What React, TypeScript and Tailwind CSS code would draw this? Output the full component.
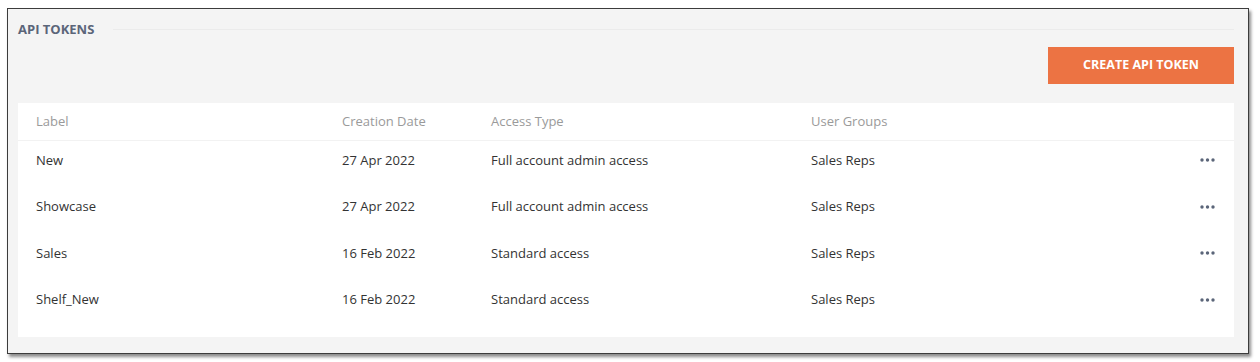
const tokens = [
  { label: "New", date: "27 Apr 2022", access: "Full account admin access", groups: "Sales Reps" },
  { label: "Showcase", date: "27 Apr 2022", access: "Full account admin access", groups: "Sales Reps" },
  { label: "Sales", date: "16 Feb 2022", access: "Standard access", groups: "Sales Reps" },
  { label: "Shelf_New", date: "16 Feb 2022", access: "Standard access", groups: "Sales Reps" },
];

function Dots() {
  return (
    <svg width="15" height="4" viewBox="0 0 15 4" className="block">
      <circle cx="2" cy="2" r="1.7" fill="#5b6579" />
      <circle cx="7.5" cy="2" r="1.7" fill="#5b6579" />
      <circle cx="13" cy="2" r="1.7" fill="#5b6579" />
    </svg>
  );
}

export default function App() {
  return (
    <div className="w-[1260px] h-[362px] bg-white pt-[8px] pl-[7px] font-['Open_Sans',sans-serif]">
      <div className="w-[1242px] h-[346px] bg-[#f4f4f4] border border-[#3c3c3c] shadow-[2px_3px_3px_rgba(0,0,0,0.45)] pl-[10px] pr-[14px] pt-[13px]">
        {/* Title */}
        <div className="flex items-center h-[14px]">
          <span className="text-[13px] font-bold text-[#5b6579] leading-none">API TOKENS</span>
          <div className="flex-1 ml-[19px] h-px bg-[#ebebeb]"></div>
        </div>

        {/* Action */}
        <div className="flex justify-end mt-[11px]">
          <button className="w-[186px] h-[37px] bg-[#ec7343] text-white text-[12.5px] font-bold leading-none">
            CREATE API TOKEN
          </button>
        </div>

        {/* Table */}
        <div className="mt-[19px] h-[234px] bg-white text-[13px]">
          <div className="grid grid-cols-[306px_149px_320px_1fr_auto] items-center h-[38px] pl-[18px] pr-[19px] border-b border-[#f2f2f2] text-[#9a9a9a]">
            <span>Label</span>
            <span>Creation Date</span>
            <span>Access Type</span>
            <span>User Groups</span>
            <span></span>
          </div>
          {tokens.map((t) => (
            <div
              key={t.label}
              className="grid grid-cols-[306px_149px_320px_1fr_auto] items-center h-[46.5px] pl-[18px] pr-[19px] pb-[8px] text-[#333]"
            >
              <span>{t.label}</span>
              <span>{t.date}</span>
              <span>{t.access}</span>
              <span>{t.groups}</span>
              <Dots />
            </div>
          ))}
        </div>
      </div>
    </div>
  );
}
